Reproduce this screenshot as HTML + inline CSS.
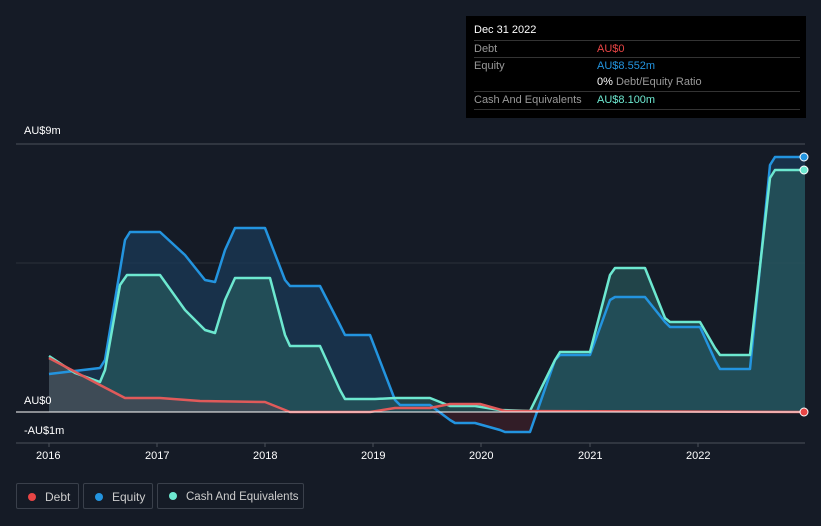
<!DOCTYPE html>
<html><head><meta charset="utf-8"><style>
html,body{margin:0;width:821px;height:526px;background:#151b26;font-family:"Liberation Sans",sans-serif;overflow:hidden;position:relative}
.t{position:absolute;color:#fff;font-size:11px;white-space:nowrap}
.tip{position:absolute;left:466px;top:16px;width:340px;height:102px;background:#000}
.row{position:absolute;left:8px;width:326px;border-top:1px solid #333;font-size:11px;color:#999;height:17px;line-height:17px;white-space:nowrap}
.leg{position:absolute;top:483px;height:26px;border:1px solid #3a404b;border-radius:2px;color:#ccc;font-size:12px;line-height:26px;white-space:nowrap;box-sizing:border-box}
.leg i{display:inline-block;width:8px;height:8px;border-radius:50%;margin:0 9px 0 11px}
</style></head><body>
<svg width="821" height="526" style="position:absolute;left:0;top:0" stroke-linejoin="round">
<line x1="16" y1="144" x2="805" y2="144" stroke="#4a505a"/>
<line x1="16" y1="263" x2="805" y2="263" stroke="#2a303a"/>
<line x1="16" y1="443" x2="805" y2="443" stroke="#4a505a"/>
<g stroke="#4a505a"><line x1="49" y1="443" x2="49" y2="447"/><line x1="157" y1="443" x2="157" y2="447"/><line x1="265" y1="443" x2="265" y2="447"/><line x1="373" y1="443" x2="373" y2="447"/><line x1="481" y1="443" x2="481" y2="447"/><line x1="590" y1="443" x2="590" y2="447"/><line x1="698" y1="443" x2="698" y2="447"/></g>
<path d="M430,412 L450,420 455,423 475,423 500,430 505,432 530,432 538,412Z" fill="#3a1e28" fill-opacity="0.8"/>
<path d="M49,374 L100,368 105,360 125,240 130,232 160,232 185,255 205,280 215,282 225,250 235,228 265,228 285,280 290,286 320,286 340,325 345,335 370,335 395,400 400,405 430,405 440,412 538,412 555,360 560,355 590,355 610,300 615,297 645,297 665,322 670,327 700,327 715,360 720,369 750,369 770,165 775,157 805,157 L805,412 49,412Z" fill="#1a3a5a" fill-opacity="0.7"/>
<path d="M49,356 L75,373 100,382 105,370 120,285 127,275 160,275 185,310 205,330 215,333 225,300 235,278 270,278 285,335 290,346 320,346 340,390 345,399 375,399 395,398 430,398 450,406 475,406 500,410 530,411 555,360 560,352 590,352 610,275 615,268 645,268 665,318 670,322 700,322 715,348 720,355 750,355 770,178 775,170 805,170 L805,412 49,412Z" fill="#2a6060" fill-opacity="0.6"/>
<path d="M49,358 L100,385 125,398 160,398 200,401 265,402 290,412 49,412Z" fill="#5a4a55" fill-opacity="0.5"/>
<path d="M49,374 L100,368 105,360 125,240 130,232 160,232 185,255 205,280 215,282 225,250 235,228 265,228 285,280 290,286 320,286 340,325 345,335 370,335 395,400 400,405 430,405 450,420 455,423 475,423 500,430 505,432 530,432 555,360 560,355 590,355 610,300 615,297 645,297 665,322 670,327 700,327 715,360 720,369 750,369 770,165 775,157 805,157" fill="none" stroke="#2394df" stroke-width="2.5"/>
<path d="M49,356 L75,373 100,382 105,370 120,285 127,275 160,275 185,310 205,330 215,333 225,300 235,278 270,278 285,335 290,346 320,346 340,390 345,399 375,399 395,398 430,398 450,406 475,406 500,410 530,411 555,360 560,352 590,352 610,275 615,268 645,268 665,318 670,322 700,322 715,348 720,355 750,355 770,178 775,170 805,170" fill="none" stroke="#6de8d0" stroke-width="2.5"/>
<path d="M49,358 L100,385 125,398 160,398 200,401 265,402 290,412 370,412 395,408 430,408 450,404 480,404 505,411 805,412" fill="none" stroke="#e05a5a" stroke-width="2.5"/>
<line x1="16" y1="412" x2="805" y2="412" stroke="#fff" stroke-width="1"/>
<circle cx="804" cy="157" r="4" fill="#2394df" stroke="#fff"/>
<circle cx="804" cy="170" r="4" fill="#6de8d0" stroke="#fff"/>
<circle cx="804" cy="412" r="4" fill="#e84545" stroke="#fff"/>
</svg>
<div class="t" style="left:24px;top:125px">AU$9m</div>
<div class="t" style="left:24px;top:395px">AU$0</div>
<div class="t" style="left:24px;top:425px">-AU$1m</div>
<div class="t" style="left:36px;top:450px">2016</div>
<div class="t" style="left:145px;top:450px">2017</div>
<div class="t" style="left:253px;top:450px">2018</div>
<div class="t" style="left:361px;top:450px">2019</div>
<div class="t" style="left:469px;top:450px">2020</div>
<div class="t" style="left:578px;top:450px">2021</div>
<div class="t" style="left:686px;top:450px">2022</div>
<div class="tip">
<div style="position:absolute;left:8px;top:8px;color:#fff;font-size:11px">Dec 31 2022</div>
<div class="row" style="top:24px">Debt<span style="position:absolute;left:123px;color:#e84545">AU$0</span></div>
<div class="row" style="top:41px">Equity<span style="position:absolute;left:123px;color:#2394df">AU$8.552m</span></div>
<div class="row" style="top:58px;border-top:none"><span style="position:absolute;left:123px"><b style="color:#fff;font-weight:normal">0%</b> Debt/Equity Ratio</span></div>
<div class="row" style="top:75px">Cash And Equivalents<span style="position:absolute;left:123px;color:#6de8d0">AU$8.100m</span></div>
<div class="row" style="top:93px;height:0"></div>
</div>
<div class="leg" style="left:16px;width:63px"><i style="background:#e84545"></i>Debt</div>
<div class="leg" style="left:83px;width:70px"><i style="background:#2394df"></i>Equity</div>
<div class="leg" style="left:157px;width:147px;font-size:11.5px"><i style="background:#6de8d0"></i>Cash And Equivalents</div>
</body></html>
